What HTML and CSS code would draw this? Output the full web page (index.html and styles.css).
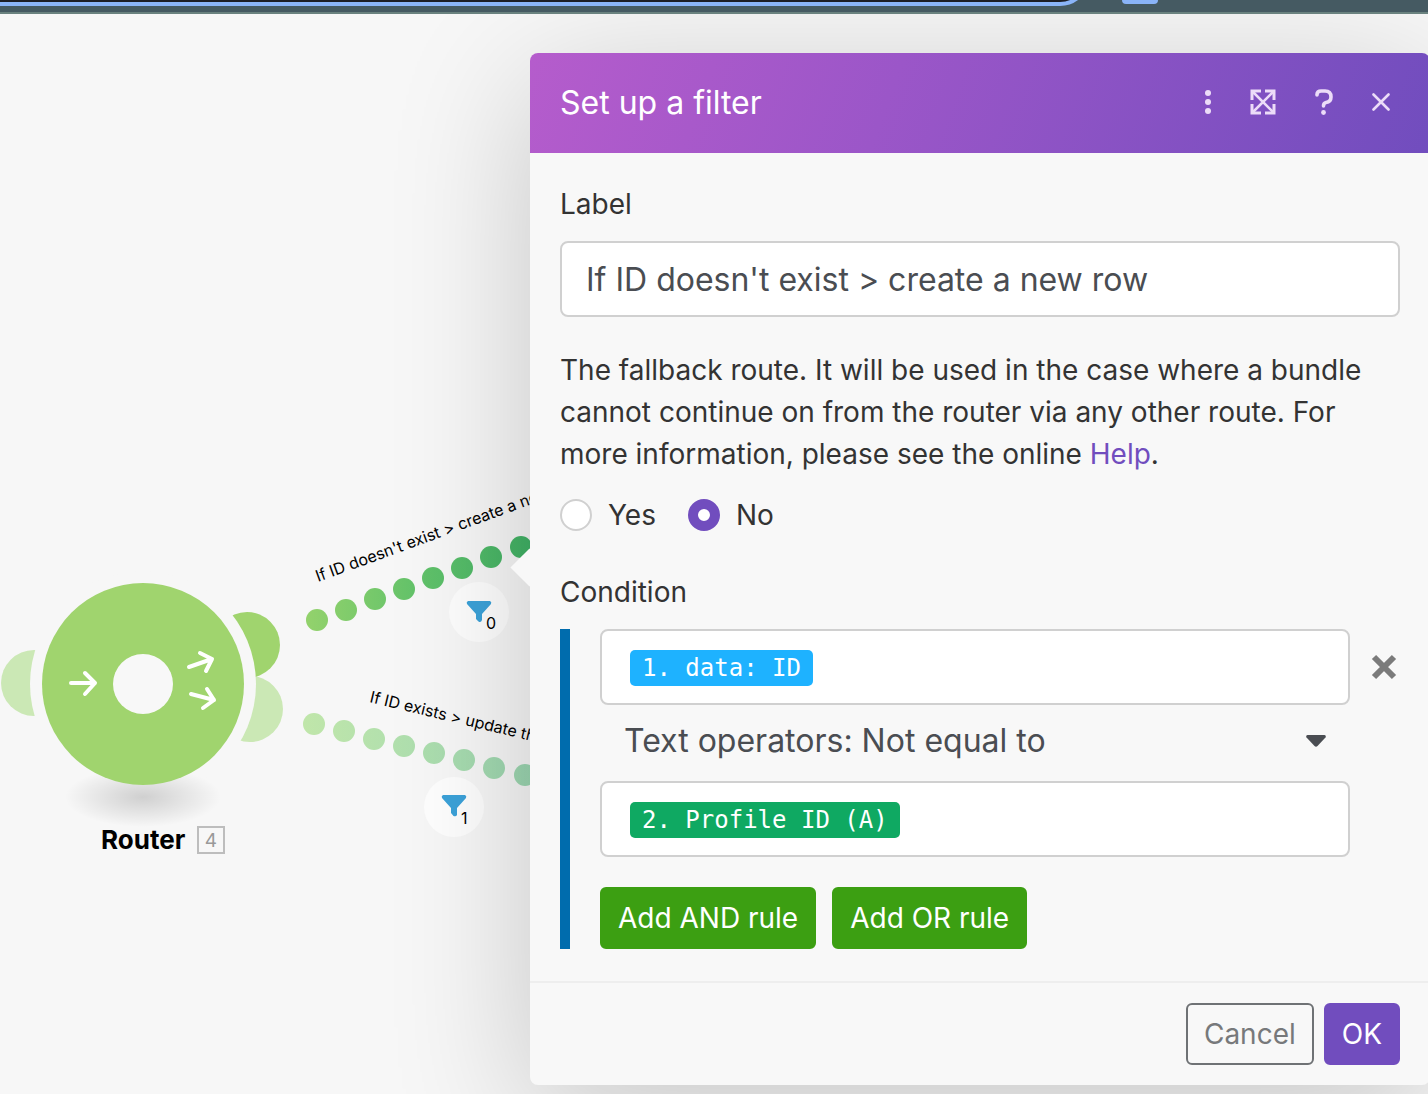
FILE: index.html
```html
<!DOCTYPE html>
<html lang="en">
<head>
    <meta charset="UTF-8">
    <meta name="viewport" content="width=device-width, initial-scale=1.0">
    <title>Set up a filter</title>
    <link rel="stylesheet" href="styles.css">
</head>
<body>
    <div class="browser-bar">
        <div class="address-bar"></div>
        <div class="tab-marker"></div>
    </div>

    <main class="canvas">
        <svg class="scenario" viewBox="0 14 600 1080" width="600" height="1080">
            <defs>
                <linearGradient id="route-new" gradientUnits="userSpaceOnUse" x1="306" y1="0" x2="532" y2="0">
                    <stop offset="0" stop-color="#93d26c"/>
                    <stop offset="0.5" stop-color="#62c26a"/>
                    <stop offset="1" stop-color="#40b266"/>
                </linearGradient>
                <linearGradient id="route-update" gradientUnits="userSpaceOnUse" x1="303" y1="0" x2="536" y2="0">
                    <stop offset="0" stop-color="#c0e6aa"/>
                    <stop offset="1" stop-color="#9bd6b2"/>
                </linearGradient>
                <radialGradient id="floor">
                    <stop offset="0" stop-color="#000" stop-opacity="0.16"/>
                    <stop offset="1" stop-color="#000" stop-opacity="0"/>
                </radialGradient>
            </defs>

            <!-- router module -->
            <circle cx="34" cy="683" r="33" fill="#cbe8b5"/>
            <circle cx="250" cy="709" r="33" fill="#cbe8b5"/>
            <circle cx="247" cy="645" r="33" fill="#a0d46e"/>
            <circle cx="143" cy="684" r="113" fill="#f7f7f7"/>
            <ellipse cx="143" cy="797" rx="78" ry="30" fill="url(#floor)"/>
            <circle cx="143" cy="684" r="101" fill="#a0d46e"/>
            <circle cx="143" cy="684" r="30" fill="#f8f8f8"/>
            <g class="arrows">
                <path d="M71 683H95M85 673L95 683L85 694"/>
                <path d="M189 667L212 659M200 653L212 659L206 671"/>
                <path d="M191 694L214 700M207 689L214 700L203 708"/>
            </g>
            <text class="module-name" x="101" y="849">Router</text>
            <rect x="198" y="827" width="26" height="26" fill="none" stroke="#bdbdbd" stroke-width="2"/>
            <text class="module-id" x="211" y="847">4</text>

            <!-- routes -->
            <g fill="url(#route-new)">
                <circle cx="317" cy="620" r="11"/>
                <circle cx="346" cy="610" r="11"/>
                <circle cx="375" cy="599" r="11"/>
                <circle cx="404" cy="589" r="11"/>
                <circle cx="433" cy="578" r="11"/>
                <circle cx="462" cy="568" r="11"/>
                <circle cx="491" cy="557" r="11"/>
                <circle cx="521" cy="547" r="11"/>
            </g>
            <text class="route-name" transform="translate(318 582) rotate(-20)">If ID doesn't exist &gt; create a new row</text>
            <g fill="url(#route-update)">
                <circle cx="314" cy="724" r="11"/>
                <circle cx="344" cy="731" r="11"/>
                <circle cx="374" cy="739" r="11"/>
                <circle cx="404" cy="746" r="11"/>
                <circle cx="434" cy="753" r="11"/>
                <circle cx="464" cy="760" r="11"/>
                <circle cx="494" cy="768" r="11"/>
                <circle cx="525" cy="775" r="11"/>
            </g>
            <text class="route-name" transform="translate(369 702) rotate(13.5)">If ID exists &gt; update the row</text>

            <!-- filters -->
            <g class="filter">
                <circle cx="479" cy="612" r="30"/>
                <path d="M468 601H490Q492 602 491 604L482 614V620Q481 623 478.500 621.500L476 619V614L467 604Q466 602 468 601Z"/>
                <text x="486" y="629">0</text>
            </g>
            <g class="filter">
                <circle cx="454" cy="807" r="30"/>
                <path d="M443 795H465Q467 796 466 798L457 808V815Q456 817 453.500 816L451 813V808L442 798Q441 796 443 795Z"/>
                <text x="461" y="824">1</text>
            </g>
        </svg>

        <section class="panel">
            <header class="panel-header">
                <h1>Set up a filter</h1>
                <div class="panel-tools">
                    <button type="button" aria-label="More">
                        <svg width="6" height="28" viewBox="0 0 6 28" fill="currentColor"><circle cx="3" cy="4" r="3"/><circle cx="3" cy="13" r="3"/><circle cx="3" cy="22" r="3"/></svg>
                    </button>
                    <button type="button" aria-label="Expand">
                        <svg width="26" height="28" viewBox="0 0 26 28" fill="none" stroke="currentColor" stroke-width="3"><path d="M3 3L23 23M23 3L3 23" stroke-width="2.6"/><path d="M11 2H2V11M15 2H24V11M11 24H2V15M15 24H24V15"/></svg>
                    </button>
                    <button type="button" aria-label="Help">
                        <svg width="18" height="28" viewBox="0 0 18 28"><path d="M2 6V5.500Q2 2 6 2H10Q16 2 16 8Q16 13 11 13.500Q8.500 14 8.500 17" fill="none" stroke="currentColor" stroke-width="3.600" stroke-linecap="round"/><circle cx="8.500" cy="23.500" r="2.400" fill="currentColor"/></svg>
                    </button>
                    <button type="button" aria-label="Close">
                        <svg width="18" height="28" viewBox="0 0 18 28" fill="none" stroke="currentColor" stroke-width="2.600" stroke-linecap="round"><path d="M1.500 5.500L16.500 20.500M16.500 5.500L1.500 20.500"/></svg>
                    </button>
                </div>
            </header>

            <form class="filter-form" id="filter-form">
                <label class="field-label" for="filter-label">Label</label>
                <input class="field" type="text" id="filter-label" value="If ID doesn't exist &gt; create a new row">

                <fieldset class="fallback">
                    <legend>The fallback route. It will be used in the case where a bundle cannot continue on from the router via any other route. For more information, please see the online <a href="#">Help</a>.</legend>
                    <div class="choices">
                        <label><input type="radio" name="fallback" value="yes">Yes</label>
                        <label><input type="radio" name="fallback" value="no" checked>No</label>
                    </div>
                </fieldset>

                <div class="field-label" id="condition-label">Condition</div>
                <div class="condition" role="group" aria-labelledby="condition-label">
                    <div class="operands">
                        <div class="field operand" role="textbox" aria-label="Left value"><span class="chip chip-blue">1. data: ID</span></div>
                        <div class="operator">
                            <select aria-label="Operator">
                                <option>Text operators: Not equal to</option>
                                <option>Text operators: Equal to</option>
                            </select>
                            <svg width="20" height="12" viewBox="0 0 20 12"><path d="M1.500 0H18.500Q20.500 .5 19.500 2.500L11.500 11Q10 12.500 8.500 11L.5 2.500Q-.5 .5 1.500 0Z" fill="#4a4d52"/></svg>
                        </div>
                        <div class="field operand" role="textbox" aria-label="Right value"><span class="chip chip-green">2. Profile ID (A)</span></div>
                    </div>
                    <button class="remove" type="button" aria-label="Remove rule">
                        <svg width="26" height="26" viewBox="0 0 26 26" stroke="#7b7b7b" stroke-width="6"><path d="M3 3L23 23M23 3L3 23"/></svg>
                    </button>
                    <div class="rule-buttons">
                        <button class="btn btn-green" type="button">Add AND rule</button>
                        <button class="btn btn-green" type="button">Add OR rule</button>
                    </div>
                </div>
            </form>

            <footer class="panel-footer">
                <button class="btn btn-outline" type="button">Cancel</button>
                <button class="btn btn-purple" type="submit" form="filter-form">OK</button>
            </footer>
        </section>
    </main>
</body>
</html>
```
FILE: styles.css
```css
* {
    box-sizing: border-box;
}

body {
    margin: 0;
    min-height: 100vh;
    display: flex;
    flex-direction: column;
    overflow: hidden;
    font-family: Inter, sans-serif;
    font-size: 28px;
    line-height: 42px;
    color: #333;
    background-color: #f7f7f7;
}

button, input, select {
    font: inherit;
    color: inherit;
}

/* bottom edge of the browser toolbar */
.browser-bar {
    display: flex;
    gap: 32px;
    height: 14px;
    overflow: hidden;
    background-color: #455a62;
    border-bottom: 2px solid #6a827f;
}

.address-bar {
    flex: 0 0 1130px;
    height: 60px;
    margin-top: -54px;
    margin-left: -40px;
    background-color: #1c1e26;
    border: 4px solid #8ab4f8;
    border-radius: 30px;
}

.tab-marker {
    width: 36px;
    height: 4px;
    background-color: #8ab4f8;
    border-radius: 0 0 4px 4px;
}

.canvas {
    position: relative;
    flex: 1;
    min-height: 1080px;
    overflow: hidden;
}

.scenario {
    position: absolute;
    top: 0;
    left: 0;
}

.filter circle {
    fill: #fefefe;
}

.filter path {
    fill: #3ca2d9;
}

.filter text, .route-name {
    font-size: 16px;
    fill: #000;
}

.arrows {
    fill: none;
    stroke: #fff;
    stroke-width: 4;
    stroke-linecap: round;
    stroke-linejoin: round;
}

.module-name {
    font-size: 26px;
    font-weight: 700;
    fill: #000;
}

.module-id {
    font-size: 19px;
    text-anchor: middle;
    fill: #999;
}

.panel {
    position: absolute;
    top: 39px;
    left: 530px;
    right: -2px;
    background-color: #f8f8f8;
    border-radius: 8px;
    box-shadow: 0 30px 140px rgba(0, 0, 0, 0.2);
}

/* pointer towards the edited filter */
.panel::before {
    content: "";
    position: absolute;
    top: 501px;
    left: -14px;
    width: 27px;
    height: 27px;
    background-color: #f8f8f8;
    transform: rotate(45deg);
}

.panel-header {
    display: flex;
    align-items: center;
    justify-content: space-between;
    height: 100px;
    padding: 0 40px 0 30px;
    color: #fff;
    background: linear-gradient(110deg, #b55ccc, #9b56c8 40%, #714dbe);
    border-radius: 8px 8px 0 0;
}

.panel-header h1 {
    margin: 0;
    font-size: 32px;
    font-weight: 400;
}

.panel-tools {
    display: flex;
    gap: 39px;
}

.panel-tools button, .remove {
    display: flex;
    align-items: center;
    justify-content: center;
    padding: 0;
    border: none;
    background: none;
    cursor: pointer;
}

.panel-tools button {
    color: #ecdcf8;
}

.filter-form {
    position: relative;
    padding: 30px 30px 32px;
}

.field-label {
    display: block;
    margin-bottom: 16px;
}

.field {
    display: flex;
    align-items: center;
    width: 100%;
    height: 76px;
    padding: 0 24px;
    font-size: 32px;
    color: #4a4d52;
    background-color: #fff;
    border: 2px solid #d0d0d0;
    border-radius: 8px;
}

.operand {
    padding: 2px 28px 0;
}

.fallback {
    margin: 32px 0 35px;
    padding: 0;
    border: none;
}

.fallback legend {
    padding: 0;
}

.fallback a {
    color: #714dbe;
    text-decoration: none;
}

.choices {
    display: flex;
    gap: 32px;
    padding-top: 19px;
}

.choices label {
    display: flex;
    align-items: center;
    gap: 16px;
}

.choices input {
    appearance: none;
    width: 32px;
    height: 32px;
    margin: 0;
    background-color: #fff;
    border: 2px solid #d0d0d0;
    border-radius: 50%;
}

.choices input:checked {
    border: 10px solid #714dbe;
}

.condition {
    display: grid;
    grid-template-columns: 1fr 32px;
    column-gap: 18px;
    row-gap: 30px;
    padding-left: 30px;
    border-left: 10px solid #006cad;
}

.chip {
    padding: 0 12px;
    font-family: "DejaVu Sans Mono", monospace;
    font-size: 24px;
    line-height: 36px;
    color: #fff;
    border-radius: 5px;
}

.chip-blue {
    background-color: #1eb2ff;
}

.chip-green {
    background-color: #0fa962;
}

.operator {
    display: flex;
    align-items: center;
    height: 76px;
    padding: 0 24px 4px 0;
}

.operator select {
    appearance: none;
    flex: 1;
    height: 72px;
    margin-right: -20px;
    padding: 0 24px;
    font-size: 32px;
    color: #4a4d52;
    border: none;
    background: none;
}

.operator svg {
    pointer-events: none;
}

.remove {
    height: 76px;
}

.rule-buttons {
    display: flex;
    gap: 16px;
}

.btn {
    height: 62px;
    padding: 0 16px;
    border: 2px solid transparent;
    border-radius: 6px;
    cursor: pointer;
}

.btn-green {
    color: #fff;
    background-color: #3c9f12;
    border-color: #3c9f12;
}

.btn-outline {
    color: #77797b;
    background-color: transparent;
    border-color: #6f7275;
}

.btn-purple {
    color: #fff;
    background-color: #714dbe;
    border-color: #714dbe;
}

.panel-footer {
    display: flex;
    justify-content: flex-end;
    gap: 10px;
    padding: 20px 30px;
    border-top: 2px solid #eee;
}
```
